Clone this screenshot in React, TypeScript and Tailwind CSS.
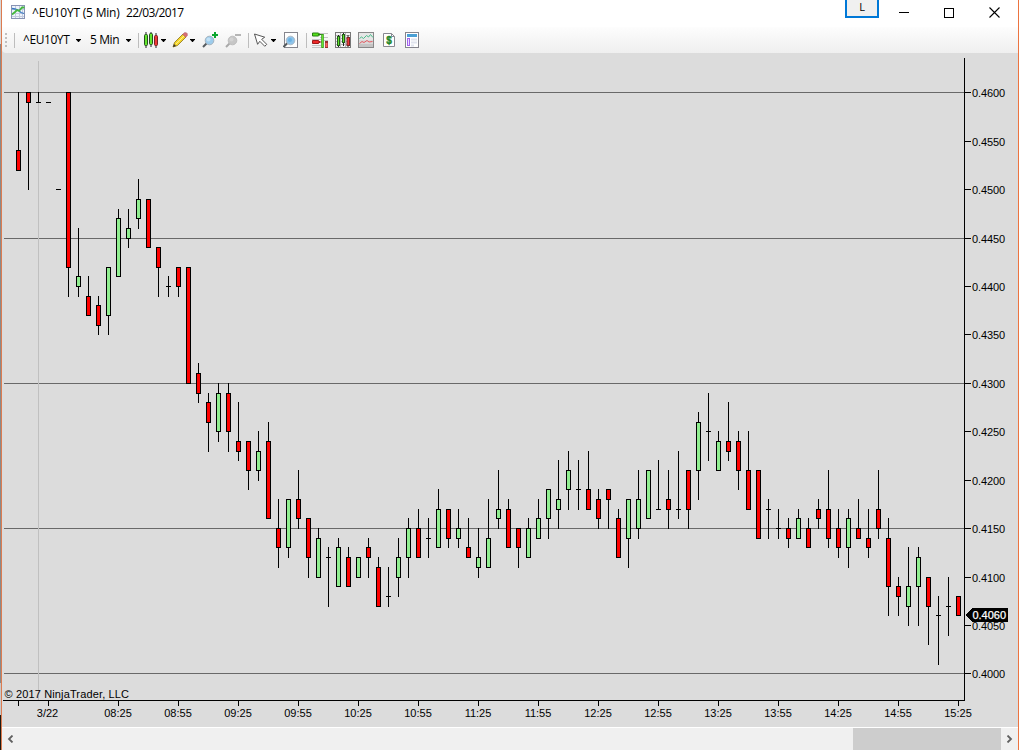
import React from 'react';

type Candle = [open: number, high: number, low: number, close: number];

// prices in thousandths, one entry for every 5 minute bar
const CANDLES: Candle[] = [
  [454, 460, 452, 452], [460, 460, 450, 459], [459, 460, 459, 459], [459, 459, 459, 459], [450, 450, 450, 450],
  [460, 460, 439, 442], [440, 446, 439, 441], [439, 441, 437, 437], [438, 439, 435, 436], [437, 442, 435, 442],
  [441, 448, 441, 447], [445, 448, 444, 446], [447, 451, 446, 449], [449, 449, 444, 444], [444, 444, 439, 442],
  [440, 441, 439, 440], [442, 442, 439, 440], [442, 442, 430, 430], [431, 432, 428, 429], [428, 429, 423, 426],
  [425, 430, 424, 429], [429, 430, 423, 425], [424, 428, 422, 423], [424, 424, 419, 421], [421, 425, 420, 423],
  [424, 426, 416, 416], [415, 418, 411, 413], [413, 418, 412, 418], [418, 421, 415, 416], [416, 416, 410, 412],
  [410, 415, 410, 414], [412, 413, 407, 412], [409, 414, 409, 413], [412, 413, 409, 409], [410, 412, 410, 412],
  [413, 414, 410, 412], [411, 412, 407, 407], [408, 411, 407, 408], [410, 414, 408, 412], [412, 416, 410, 415],
  [415, 417, 412, 412], [414, 416, 412, 414], [413, 419, 413, 417], [417, 417, 413, 414], [414, 417, 413, 415],
  [413, 416, 412, 412], [411, 415, 410, 412], [411, 418, 411, 414], [416, 421, 415, 417], [417, 418, 413, 413],
  [415, 415, 411, 413], [412, 416, 412, 415], [414, 418, 414, 416], [416, 419, 414, 419], [417, 422, 415, 418],
  [419, 423, 417, 421], [419, 422, 417, 419], [419, 423, 417, 417], [418, 419, 415, 416], [419, 419, 415, 418],
  [416, 417, 412, 412], [414, 418, 411, 418], [415, 421, 414, 418], [416, 421, 416, 421], [417, 422, 417, 417],
  [418, 421, 415, 417], [417, 423, 416, 417], [421, 421, 415, 417], [421, 427, 418, 426], [425, 429, 422, 425],
  [421, 425, 421, 424], [424, 428, 422, 423], [424, 425, 419, 421], [421, 425, 417, 417], [421, 421, 414, 414],
  [417, 418, 414, 417], [415, 417, 414, 415], [415, 416, 413, 414], [414, 417, 414, 416], [415, 416, 413, 413],
  [417, 418, 415, 416], [417, 421, 413, 414], [415, 417, 412, 413], [413, 417, 411, 416], [415, 418, 414, 414],
  [414, 417, 412, 413], [417, 421, 414, 415], [414, 416, 406, 409], [409, 410, 406, 408], [407, 413, 405, 409],
  [409, 413, 405, 412], [410, 410, 403, 407], [406, 408, 401, 406], [407, 410, 404, 407], [408, 408, 406, 406],
];

const PRICES = [460, 455, 450, 445, 440, 435, 430, 425, 420, 415, 410, 405, 400];
const GRID = [460, 445, 430, 415, 400];
const TIMES = ['3/22', '08:25', '08:55', '09:25', '09:55', '10:25', '10:55', '11:25', '11:55', '12:25', '12:55', '13:25', '13:55', '14:25', '14:55', '15:25'];

// the chart panel starts 2px from the left and 53px from the top of the window
const toY = (price: number) => Math.floor(39.84 + (460 - price) * 9.6833);
const toX = (i: number) => 16 + i * 10;
const timeX = (i: number) => (i === 0 ? 46 : 56 + i * 60);

const Chart: React.FC = () => (
  <svg width="1016" height="674" className="block font-['Liberation_Sans',Arial,sans-serif] text-[11px]" shapeRendering="crispEdges">
    {GRID.map((p) => <rect key={p} x="2" y={toY(p)} width="960" height="1" fill="#696969" />)}
    <rect x="36" y="8" width="1" height="639" fill="#c0c0c0" />

    {CANDLES.map(([o, h, l, c], i) => {
      const x = toX(i);
      const top = toY(Math.max(o, c));
      const bottom = toY(Math.min(o, c));
      return (
        <g key={i}>
          <rect x={x} y={toY(h)} width="1" height={toY(l) - toY(h) + 1} fill="#000" />
          <rect x={x - 2} y={top} width="5" height={bottom - top + 1} fill="#000" />
          {o !== c && <rect x={x - 1} y={top + 1} width="3" height={bottom - top - 1} fill={c > o ? '#90ee90' : '#ff0000'} />}
        </g>
      );
    })}

    {/* axes */}
    <rect x="962" y="5" width="1" height="643" fill="#000" />
    <rect x="1" y="647" width="962" height="1" fill="#000" />
    {PRICES.map((p) => (
      <g key={p}>
        <rect x="963" y={toY(p)} width="6" height="1" fill="#000" />
        <text x="970" y={toY(p) + 5} textLength="33" fill="#000">0.{p}0</text>
      </g>
    ))}
    <rect x="16" y="648" width="1" height="5" fill="#000" />
    {TIMES.map((t, i) => (
      <g key={t}>
        <rect x={timeX(i)} y="648" width="1" height="5" fill="#000" />
        <text x={timeX(i) - (i === 0 ? 0.5 : 0)} y="664" textAnchor="middle" fill="#000">{t}</text>
      </g>
    ))}
    <text x="2.5" y="645" textLength="124.5" fill="#000">© 2017 NinjaTrader, LLC</text>

    {/* last price */}
    <path d="M963 562 L970 555 H1006 V569 H970 Z" fill="#000" />
    <text x="970.5" y="566" textLength="33.5" fill="#fff" stroke="#fff" strokeWidth=".25">0.4060</text>
  </svg>
);

const Icon: React.FC<{ className: string; w?: number; children: React.ReactNode }> = ({ className, w = 16, children }) => (
  <svg width={w} height="16" viewBox={`0 0 ${w} 16`} fill="none" className={`shrink-0 ${className}`}>{children}</svg>
);

const Caret: React.FC<{ className: string }> = ({ className }) => (
  <svg width="5" height="3" viewBox="0 0 5 3" className={`shrink-0 ${className}`}><path d="M0 0h5v.6L2.8 3h-.6L0 .6z" fill="#000" /></svg>
);

const Separator: React.FC<{ className: string }> = ({ className }) => (
  <div className={`w-px h-[15px] shrink-0 bg-[#bdbdbd] ${className}`} />
);

const Toolbar: React.FC = () => (
  <div className="flex items-center h-[26px] shrink-0 rounded-bl-sm bg-linear-to-b from-[#fdfdfd] to-[#efefef] font-['Open_Sans','Noto_Sans',sans-serif] text-xs text-black">
    <div className="ml-[3px] flex w-0.5 shrink-0 flex-col gap-0.5">
      {[0, 1, 2, 3].map((n) => <span key={n} className="size-0.5 bg-[#c0c0c0]" />)}
    </div>
    <Separator className="ml-[7px]" />
    <span className="ml-2 w-12 shrink-0 whitespace-nowrap text-[12px] leading-4 tracking-[-0.43px]">^EU10YT</span>
    <Caret className="ml-[5px]" />
    <span className="ml-[9px] w-[30px] shrink-0 whitespace-nowrap text-[12px] leading-4 tracking-[-0.4px]">5 Min</span>
    <Caret className="ml-1.5" />
    <Separator className="ml-[7px]" />

    {/* chart style */}
    <Icon className="ml-1">
      <path d="M3 0V16M8 0V15M13 1V16" stroke="#222" />
      <rect x="1.5" y="2.5" width="3" height="11" rx="1" fill="#62e52c" stroke="#274f20" />
      <rect x="6.5" y="1.5" width="3" height="11" rx="1" fill="#62e52c" stroke="#274f20" />
      <rect x="11.5" y="3.5" width="3" height="10" rx="1" fill="#ef3939" stroke="#792323" />
    </Icon>
    <Caret className="ml-0.5" />

    {/* drawing tools */}
    <Icon className="ml-1.5">
      <path d="M1 15 2.5 10.5 11 2l3 3-8.5 8.5z" fill="#f4d62b" stroke="#8a7018" strokeWidth=".8" />
      <path d="m4 12 8.5-8.5" stroke="#fff08a" />
      <path d="m10.7 2.3 1.6-1.6h2l1 1v2l-1.7 1.6z" fill="#d86e74" stroke="#a4565c" strokeWidth=".5" />
      <path d="m1 15 1-3 2 2z" fill="#333" />
    </Icon>
    <Caret className="ml-0.5" />

    {/* zoom in / out */}
    <Icon className="ml-[7px]">
      <path d="m1 15 4-4" stroke="#555b5f" strokeWidth="2" />
      <circle cx="7.5" cy="8.5" r="4.3" fill="#9dccec" stroke="#a4b2bd" />
      <circle cx="6.5" cy="7.5" r="2" fill="#c2e1f5" />
      <path d="M13 0v6M10 3h6" stroke="#0ba62f" strokeWidth="2" />
    </Icon>
    <Icon className="ml-[7px]">
      <path d="m1 15 4-4" stroke="#a9a9a9" strokeWidth="2" />
      <circle cx="7.5" cy="8.5" r="4.3" fill="#c6c6c6" stroke="#bdbdbd" />
      <circle cx="6.5" cy="7.5" r="2" fill="#d3d3d3" />
      <path d="M10 3h6" stroke="#b5b5b5" strokeWidth="2" />
    </Icon>
    <Separator className="ml-[7px]" />

    {/* pointer */}
    <Icon className="ml-[5px]">
      <path d="m.5 2 10.2 3.2-3 2.1 5 5-1.9 2-5-5-2.2 3z" fill="#fff" stroke="#444" strokeWidth=".9" />
    </Icon>
    <Caret className="ml-[1px]" />
    <Icon className="ml-[7px]">
      <rect x="1.5" y=".5" width="13" height="15" fill="#fff" stroke="#85858d" />
      <path d="m.5 15 4-4" stroke="#555b5f" strokeWidth="2" />
      <circle cx="7.5" cy="8.5" r="4.3" fill="#8ec4eb" stroke="#b0bbc5" />
      <circle cx="7" cy="8" r="2" fill="#69b1e3" />
    </Icon>
    <Separator className="ml-[7px]" />

    {/* chart trader */}
    <Icon className="ml-[5px]">
      <path d="M7 1.5h9M8 5.5h8M0 7.5h9M0 13.5h9M0 15.5h9M12 8.5h4" stroke="#c4c4c4" />
      <path d="M.5 1h6L8 2.5 6.5 4h-6zM6 2.5h5" fill="#55e219" stroke="#287c14" />
      <path d="M.5 8.5h6L8 10 6.5 11.5h-6zM6 10h5" fill="#ee2828" stroke="#9d1919" />
      <path d="M10.5 2v14" stroke="#3d9f1e" strokeWidth="2.6" />
      <path d="M10.5 3v12" stroke="#62e52c" />
      <path d="M14.5 9v7" stroke="#973030" strokeWidth="3" />
      <path d="M14.5 11v4" stroke="#f86262" strokeWidth="2" />
    </Icon>

    {/* data series */}
    <Icon className="ml-[7px]">
      <rect x=".5" y=".5" width="15" height="15" fill="#f5f5f5" stroke="#777" />
      <path d="M1 3.5h14M1 6.5h14M1 9.5h14M1 12.5h14M5.5 1v14M10.5 1v14" stroke="#b7b7b7" />
      <path d="M3.5 3v12M8.5 1v13M13 3v12" stroke="#222" />
      <rect x="2.5" y="4.5" width="2" height="9" fill="#62e52c" stroke="#235c1a" />
      <rect x="7.5" y="2.5" width="2" height="8" fill="#62e52c" stroke="#235c1a" />
      <rect x="12" y="5.5" width="2.5" height="8" fill="#ef3939" stroke="#792323" />
    </Icon>

    {/* indicators */}
    <Icon className="ml-[7px]">
      <rect x=".5" y=".5" width="15" height="15" fill="#e6e6e6" stroke="#888" />
      <path d="M1 8h14v4H1z" fill="#d8d8d8" />
      <path d="M1 12h14v3H1z" fill="#c4c4c4" />
      <path d="m1.5 6.5 2-1.5 2 1.5 3-3 2 1.5 2-2.5 2.5 3" stroke="#49bd8a" />
      <path d="m1.5 11.5 2.5-2 2 1 3-2 2 1.5 3.5-.5" stroke="#e45b62" />
    </Icon>

    {/* strategies */}
    <Icon className="ml-[7px]">
      <path d="M2.5 1.5h8l3 3v10h-11z" fill="#fff" stroke="#888890" />
      <path d="M10.5 1.5v3h3" stroke="#888890" />
      <text x="8" y="12" textAnchor="middle" fill="#248729" stroke="#248729" strokeWidth=".4" className="font-['Liberation_Sans',Arial,sans-serif] text-[10px] font-bold">$</text>
    </Icon>

    {/* properties */}
    <Icon className="ml-[7px]">
      <rect x="1.5" y=".5" width="13" height="15" fill="#fff" stroke="#85858d" />
      <path d="M3 3.5h10" stroke="#4aa0d5" strokeWidth="3" />
      <rect x="3.5" y="6.5" width="2" height="7" fill="#eedfff" stroke="#a164ed" />
      <path d="M7 7.5h6M7 10.5h6M7 13.5h3" stroke="#dfe3ee" strokeWidth="2" />
    </Icon>
  </div>
);

const TitleBar: React.FC = () => (
  <div className="relative flex h-[27px] shrink-0 items-start bg-white text-black">
    <svg width="15" height="14" viewBox="0 0 15 14" fill="none" className="ml-[9px] mt-[5px] shrink-0">
      <rect x=".5" y=".5" width="13" height="13" fill="#eef4fc" stroke="#8893b4" />
      <path d="M1 4.5h12M1 8.5h12M1 11.5h12M4.5 1v12M8.5 1v12M11.5 1v12" stroke="#c2cadd" />
      <path d="m1 3.5 3 .5 3 1 3 2.5 3 1" stroke="#397ac2" strokeWidth="1.3" />
      <path d="m1 9.5 3-2.5 2-2 2 1 3-3.5h2.5" stroke="#46b83e" strokeWidth="1.8" />
    </svg>
    <div className="ml-1.5 mt-[5px] flex shrink-0 whitespace-nowrap font-['Open_Sans','Noto_Sans',sans-serif] text-[12px] leading-4">
      <span className="w-[94px] tracking-[-0.21px]">^EU10YT (5 Min)</span>
      <span className="tracking-[-0.62px]">22/03/2017</span>
    </div>
    <div className="absolute left-[843px] top-0 flex h-[18px] w-[34px] justify-center border-2 border-t-0 border-[#0078d7] bg-[#f0f0f0] font-['Open_Sans',sans-serif] text-[11px] leading-[14px]">L</div>
    <div className="ml-auto mr-[18px] mt-[7px] flex h-[11px] items-center">
      <span className="h-px w-2.5 bg-black" />
      <span className="ml-[35px] size-2.5 border border-black" />
      <svg width="11" height="11" viewBox="0 0 11 11" className="ml-[35px]"><path d="m.5.5 10 10m0-10-10 10" stroke="#000" strokeWidth="1.1" /></svg>
    </div>
  </div>
);

const ScrollBar: React.FC = () => (
  <div className="flex h-[23px] shrink-0 items-center border-t border-white bg-[#f0f0f0]">
    <svg width="7" height="8" viewBox="0 0 7 8" fill="none" className="ml-[5px]"><path d="M5.5.5 2 4l3.5 3.5" stroke="#606060" strokeWidth="1.8" /></svg>
    <div className="ml-[839px] h-full w-[148px] bg-[#cdcdcd]" />
    <svg width="7" height="8" viewBox="0 0 7 8" fill="none" className="ml-[5px]"><path d="M1.5.5 5 4 1.5 7.5" stroke="#606060" strokeWidth="1.8" /></svg>
  </div>
);

export default function App() {
  return (
    <div className="flex h-[750px] w-[1019px] overflow-hidden bg-[#dcdcdc]">
      {/* sliver of the desktop behind the window */}
      <div className="flex w-px shrink-0 flex-col">
        <div className="h-11 bg-[#d8d8d8]" />
        <div className="h-[639px] bg-[#8a8a8a]" />
        <div className="h-8 bg-[#c8c8c8]" />
        <div className="flex-1 bg-[#1c1c14]" />
      </div>
      <div className="w-px shrink-0 bg-[#dc7b50]" />
      <div className="flex w-[1016px] shrink-0 flex-col">
        <TitleBar />
        <Toolbar />
        <div className="h-[674px] shrink-0 bg-[#dcdcdc]">
          <Chart />
        </div>
        <ScrollBar />
      </div>
      <div className="w-px shrink-0 bg-[#ec7440]" />
    </div>
  );
}
